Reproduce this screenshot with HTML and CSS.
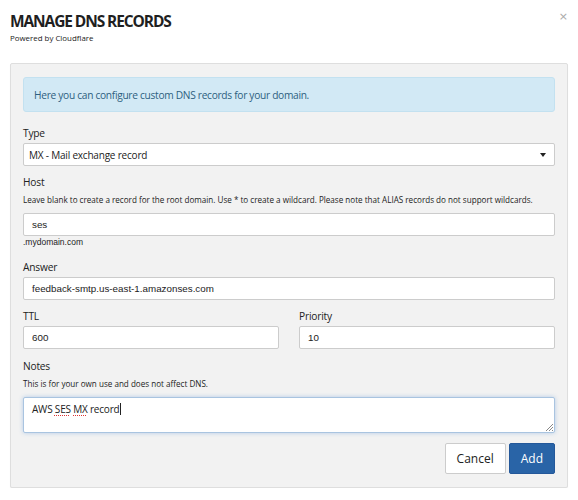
FILE: index.html
```html
<!DOCTYPE html>
<html lang="en">
<head>
  <meta charset="UTF-8">
  <meta name="viewport" content="width=device-width,initial-scale=1">
  <title>Manage DNS Records</title>
  <link rel="stylesheet" href="styles.css">
</head>
<body>
  <div class="modal">
    <!-- header -->
    <div class="modal-head">
      <div>
        <h1>MANAGE DNS RECORDS</h1>
        <p class="sub">Powered by Cloudflare</p>
      </div>
      <span class="close">&times;</span>
    </div>

    <!-- form panel -->
    <form class="panel">
      <div class="alert">Here you can configure custom DNS records for your domain.</div>

      <div class="group">
        <label>Type</label>
        <div class="select">
          <span>MX - Mail exchange record</span>
          <span class="caret"></span>
        </div>
      </div>

      <div class="group">
        <label>Host</label>
        <p class="help">Leave blank to create a record for the root domain. Use * to create a wildcard. Please note that ALIAS records do not support wildcards.</p>
        <div class="input">ses</div>
        <p class="suffix">.mydomain.com</p>
      </div>

      <div class="group">
        <label>Answer</label>
        <div class="input">feedback-smtp.us-east-1.amazonses.com</div>
      </div>

      <div class="row">
        <div class="group">
          <label>TTL</label>
          <div class="input">600</div>
        </div>
        <div class="group">
          <label>Priority</label>
          <div class="input">10</div>
        </div>
      </div>

      <div class="group">
        <label>Notes</label>
        <p class="help">This is for your own use and does not affect DNS.</p>
        <div class="textarea">AWS <u>SES</u> <u>MX</u> record<i class="cursor"></i>
          <svg class="grip" width="8" height="8" viewBox="0 0 8 8"><path d="M8 1L1 8M8 4L4 8M8 7L7 8" stroke="#888" stroke-width="1"/></svg>
        </div>
      </div>

      <div class="actions">
        <button type="button" class="btn">Cancel</button>
        <button type="button" class="btn primary">Add</button>
      </div>
    </form>
  </div>
</body>
</html>
```

FILE: styles.css
```css
* { margin:0; padding:0; box-sizing:border-box; }
html, body { background:#fff; color:#222; font-family:"Open Sans", sans-serif; }
body { padding:10px 10px 0; }

/* ---- header ---- */
.modal-head { display:flex; justify-content:space-between; align-items:flex-start; height:53px; }
h1 { font-size:15.5px; font-weight:700; letter-spacing:-1.1px; line-height:20px; color:#1f1f1f; margin-top:1px; }
.sub { font-size:7.9px; line-height:12px; margin-top:1px; color:#222; }
.close { font-family:"DejaVu Sans", sans-serif; font-size:11px; color:#aaa; margin:1px 0 0; line-height:12px; }

/* ---- panel ---- */
.panel { background:#f2f2f2; border:1px solid #dedede; border-radius:2px; padding:13px 12px 13px; box-shadow:0 1px 1px rgba(0,0,0,0.06); }
.alert { background:#d2e9f5; border:1px solid #c3e1f0; border-radius:3px; height:35px; padding:0 10px; display:flex; align-items:center; font-size:10.2px; letter-spacing:-0.3px; color:#2d5f80; margin-bottom:14px; }

/* groups are flex columns so the inner margins simply add up */
.group { display:flex; flex-direction:column; margin-bottom:9px; }
label { display:block; font-size:10.2px; letter-spacing:-0.2px; line-height:14px; margin-bottom:3px; color:#222; }
.help { font-size:8.1px; line-height:12px; margin:2px 0 7px; color:#222; }
.suffix { font-family:"Liberation Sans", Arial, sans-serif; font-size:8.5px; line-height:12px; margin:0 0 3px; color:#222; }

.input, .select, .textarea {
  background:#fff; border:1px solid #ccc; border-radius:2px; height:23px;
  padding:0 8px; display:flex; align-items:center; font-size:10px; letter-spacing:-0.2px; color:#222;
}
.input { font-family:"Liberation Sans", Arial, sans-serif; font-size:9.8px; letter-spacing:0; }
.select { justify-content:space-between; padding:0 8px 0 5px; }
.caret { width:0; height:0; border-left:3px solid transparent; border-right:3px solid transparent; border-top:4px solid #222; }

.row { display:grid; grid-template-columns:1fr 1fr; gap:20px; margin-bottom:1px; }

.textarea { display:block; position:relative; height:36px; padding-top:3px; line-height:16px; font-size:10px; border-color:#a9c4e0; box-shadow:0 0 4px rgba(102,155,220,0.45); }
.textarea u { text-decoration:underline dotted #d33; text-underline-offset:2px; }
.cursor { display:inline-block; width:1px; height:12px; background:#222; margin-left:1px; vertical-align:-2px; }
.grip { position:absolute; right:1px; bottom:1px; }

/* ---- buttons ---- */
.actions { display:flex; justify-content:flex-end; gap:3px; margin-top:10px; }
.btn { font-family:"Open Sans", sans-serif; font-size:12px; height:31px; padding:0 11px; border:1px solid #ccc; border-radius:2px; background:#fff; color:#222; }
.btn.primary { background:#2964a7; border-color:#24589a; color:#fff; padding:0 11px; }
```
